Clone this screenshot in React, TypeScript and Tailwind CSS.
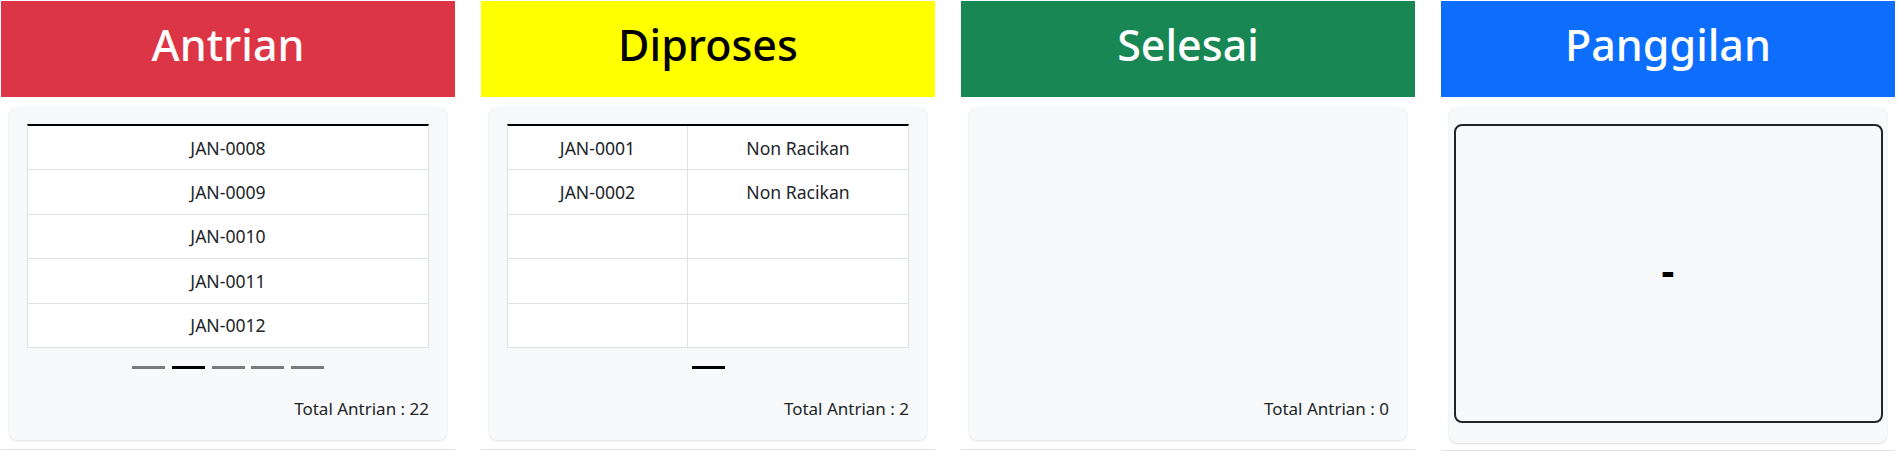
import React from "react";

const font = { fontFamily: '"Noto Sans", "Open Sans", sans-serif' };

function Header({ title, cls }: { title: string; cls: string }) {
  return (
    <div className={`h-[96px] flex items-center justify-center pb-[8px] ${cls}`}>
      <span className="text-[43px] font-medium leading-[1.2]">{title}</span>
    </div>
  );
}

function Dashes({ count, active }: { count: number; active: number }) {
  return (
    <div className="flex justify-center gap-[6.6px] mt-[18px]">
      {Array.from({ length: count }).map((_, i) => (
        <div
          key={i}
          className={i === active ? "w-[33px] h-[3px] bg-black" : "w-[33px] h-[3px] bg-black opacity-50"}
        />
      ))}
    </div>
  );
}

function Total({ n }: { n: number }) {
  return (
    <div className="mt-auto pb-[18px] text-right text-[17px] leading-[26.4px] text-[#212529]">
      Total Antrian : {n}
    </div>
  );
}

export default function App() {
  const antrian = ["JAN-0008", "JAN-0009", "JAN-0010", "JAN-0011", "JAN-0012"];
  const proses = [
    ["JAN-0001", "Non Racikan"],
    ["JAN-0002", "Non Racikan"],
    ["", ""],
    ["", ""],
    ["", ""],
  ];
  return (
    <div className="w-[1898px] h-[451px] bg-white overflow-hidden flex gap-[26px] pl-[1px] pt-[1px]" style={font}>
      {/* Antrian */}
      <div className="w-[454px] flex flex-col shrink-0">
        <Header title="Antrian" cls="bg-[#dc3545] text-white" />
        <div className="mt-[10px] mx-[8px] h-[333px] rounded-lg bg-[#f8f9fa] shadow-sm px-[18px] pt-[17px] flex flex-col">
          <div className="border-t-2 border-black border-x border-x-[#dee2e6] bg-white">
            {antrian.map((a) => (
              <div
                key={a}
                className="h-[44.4px] border-b border-[#dee2e6] flex items-center justify-center text-[17.6px] text-[#212529]"
              >
                {a}
              </div>
            ))}
          </div>
          <Dashes count={5} active={1} />
          <Total n={22} />
        </div>
        <div className="mt-[9px] h-px bg-[#dee2e6]" />
      </div>

      {/* Diproses */}
      <div className="w-[454px] flex flex-col shrink-0">
        <Header title="Diproses" cls="bg-[#ffff00] text-black" />
        <div className="mt-[10px] mx-[8px] h-[333px] rounded-lg bg-[#f8f9fa] shadow-sm px-[18px] pt-[17px] flex flex-col">
          <div className="border-t-2 border-black border-x border-x-[#dee2e6] bg-white">
            {proses.map((r, i) => (
              <div key={i} className="h-[44.4px] border-b border-[#dee2e6] grid grid-cols-[180px_1fr] text-[17.6px] text-[#212529]">
                <div className="flex items-center justify-center border-r border-[#dee2e6]">{r[0]}</div>
                <div className="flex items-center justify-center">{r[1]}</div>
              </div>
            ))}
          </div>
          <Dashes count={1} active={0} />
          <Total n={2} />
        </div>
        <div className="mt-[9px] h-px bg-[#dee2e6]" />
      </div>

      {/* Selesai */}
      <div className="w-[454px] flex flex-col shrink-0">
        <Header title="Selesai" cls="bg-[#198754] text-white" />
        <div className="mt-[10px] mx-[8px] h-[333px] rounded-lg bg-[#f8f9fa] shadow-sm px-[18px] pt-[17px] flex flex-col">
          <Total n={0} />
        </div>
        <div className="mt-[9px] h-px bg-[#dee2e6]" />
      </div>

      {/* Panggilan */}
      <div className="w-[454px] flex flex-col shrink-0">
        <Header title="Panggilan" cls="bg-[#0d6efd] text-white" />
        <div className="mt-[10px] mx-[8px] h-[336px] rounded-lg bg-[#f8f9fa] shadow-sm px-[4.5px] pt-[17px] flex flex-col">
          <div className="h-[299px] border-2 border-[#212529] rounded-[8px] flex items-center justify-center pb-[7px]">
            <span className="text-[40px] font-bold leading-[1.2] text-black">-</span>
          </div>
        </div>
        <div className="mt-[7px] h-px bg-[#dee2e6]" />
      </div>
    </div>
  );
}
